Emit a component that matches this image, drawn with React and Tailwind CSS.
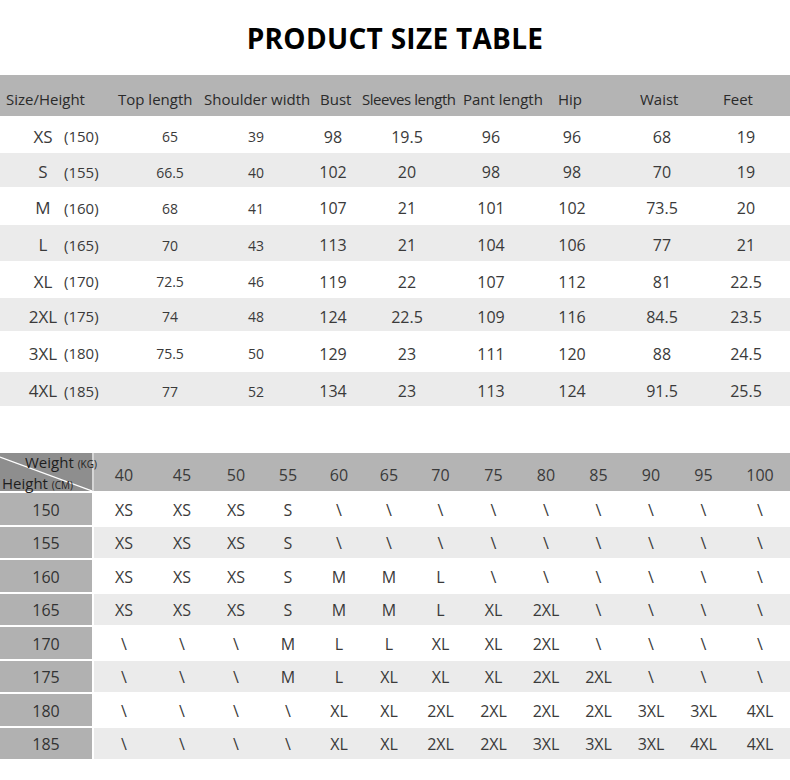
import React from 'react';

const headers = [
  { label: 'Size/Height', w: 'w-[118px] pl-[6px]' },
  { label: 'Top length', w: 'w-[86px]' },
  { label: 'Shoulder width', w: 'w-[116px]' },
  { label: 'Bust', w: 'w-[42px]' },
  { label: 'Sleeves length', w: 'w-[101px] tracking-[-0.45px]' },
  { label: 'Pant length', w: 'w-[95px]' },
  { label: 'Hip', w: 'w-[82px]' },
  { label: 'Waist', w: 'w-[83px]' },
  { label: 'Feet', w: 'flex-1' },
];

// widths for the measurement columns (cells are centred)
const cols = [
  { w: 'w-[80px]', size: 'text-[14px]' },
  { w: 'w-[92px]', size: 'text-[14px]' },
  { w: 'w-[62px]', size: 'text-[16px]' },
  { w: 'w-[86px]', size: 'text-[16px]' },
  { w: 'w-[82px]', size: 'text-[16px]' },
  { w: 'w-[80px]', size: 'text-[16px]' },
  { w: 'w-[100px]', size: 'text-[16px]' },
  { w: 'w-[68px]', size: 'text-[16px]' },
];

const sizes = [
  { size: 'XS', h: 150, vals: ['65', '39', '98', '19.5', '96', '96', '68', '19'], row: 'h-[37px] bg-white' },
  { size: 'S', h: 155, vals: ['66.5', '40', '102', '20', '98', '98', '70', '19'], row: 'h-[34px] bg-[#ebebeb]' },
  { size: 'M', h: 160, vals: ['68', '41', '107', '21', '101', '102', '73.5', '20'], row: 'h-[38px] bg-white' },
  { size: 'L', h: 165, vals: ['70', '43', '113', '21', '104', '106', '77', '21'], row: 'h-[36px] bg-[#ebebeb]' },
  { size: 'XL', h: 170, vals: ['72.5', '46', '119', '22', '107', '112', '81', '22.5'], row: 'h-[37px] bg-white' },
  { size: '2XL', h: 175, vals: ['74', '48', '124', '22.5', '109', '116', '84.5', '23.5'], row: 'h-[33px] bg-[#ebebeb]' },
  { size: '3XL', h: 180, vals: ['75.5', '50', '129', '23', '111', '120', '88', '24.5'], row: 'h-[41px] bg-white' },
  { size: '4XL', h: 185, vals: ['77', '52', '134', '23', '113', '124', '91.5', '25.5'], row: 'h-[34px] bg-[#ebebeb]' },
];

const weights = ['40', '45', '50', '55', '60', '65', '70', '75', '80', '85', '90', '95', '100'];
const wCols = [
  'w-[60px]', 'w-[56px]', 'w-[52px]', 'w-[52px]', 'w-[50px]', 'w-[50px]', 'w-[53px]',
  'w-[53px]', 'w-[52px]', 'w-[53px]', 'w-[52px]', 'w-[53px]', 'w-[60px]',
];

const B = '\\';
const chart = [
  { h: '150', vals: ['XS', 'XS', 'XS', 'S', B, B, B, B, B, B, B, B, B] },
  { h: '155', vals: ['XS', 'XS', 'XS', 'S', B, B, B, B, B, B, B, B, B] },
  { h: '160', vals: ['XS', 'XS', 'XS', 'S', 'M', 'M', 'L', B, B, B, B, B, B] },
  { h: '165', vals: ['XS', 'XS', 'XS', 'S', 'M', 'M', 'L', 'XL', '2XL', B, B, B, B] },
  { h: '170', vals: [B, B, B, 'M', 'L', 'L', 'XL', 'XL', '2XL', B, B, B, B] },
  { h: '175', vals: [B, B, B, 'M', 'L', 'XL', 'XL', 'XL', '2XL', '2XL', B, B, B] },
  { h: '180', vals: [B, B, B, B, 'XL', 'XL', '2XL', '2XL', '2XL', '2XL', '3XL', '3XL', '4XL'] },
  { h: '185', vals: [B, B, B, B, 'XL', 'XL', '2XL', '2XL', '3XL', '3XL', '3XL', '4XL', '4XL'] },
];

const SizeTable = () => (
  <div>
    <div className="flex h-[41px] items-center bg-[#b4b4b4] pt-[8px] text-[15px] text-[#2a2a2a]">
      {headers.map((h) => (
        <div key={h.label} className={`${h.w} shrink-0 whitespace-nowrap`}>
          {h.label}
        </div>
      ))}
    </div>
    {sizes.map((r) => (
      <div key={r.size} className={`flex items-center pt-[4px] text-[#3a3a3a] ${r.row}`}>
        <div className="ml-[24px] w-[38px] shrink-0 text-center text-[17px]">{r.size}</div>
        <div className="ml-[2px] w-[66px] shrink-0 text-[15px]">({r.h})</div>
        {r.vals.map((v, i) => (
          <div key={i} className={`${cols[i].w} ${cols[i].size} shrink-0 text-center`}>
            {v}
          </div>
        ))}
      </div>
    ))}
  </div>
);

const WeightChart = () => (
  <div>
    <div className="flex h-[38px] bg-[#b4b4b4]">
      <div className="relative w-[94px] shrink-0 border-r-2 border-[#d6d6d6] bg-[#8e8e8e] text-[15px] leading-[19px] text-[#1e1e1e]">
        <svg className="absolute inset-0" width="92" height="38">
          <line x1="0" y1="4" x2="92" y2="38" stroke="#ffffff" strokeWidth="1.2" />
        </svg>
        <div className="relative whitespace-nowrap pl-[25px]">
          Weight <span className="text-[10px]">(KG)</span>
        </div>
        <div className="relative whitespace-nowrap pl-[2px]">
          Height <span className="text-[10px]">(CM)</span>
        </div>
      </div>
      {weights.map((w, i) => (
        <div key={w} className={`${wCols[i]} flex shrink-0 items-center justify-center pt-[6px] text-[16px] text-[#3a3a3a]`}>
          {w}
        </div>
      ))}
    </div>
    {chart.map((r, ri) => (
      <div
        key={r.h}
        className={`flex h-[33.5px] border-t-2 border-white ${ri % 2 ? 'bg-[#ebebeb]' : 'bg-white'}`}
      >
        <div className="flex w-[94px] shrink-0 items-center justify-center border-r-2 border-white bg-[#b1b1b1] pt-[2px] text-[16px] text-[#333]">
          {r.h}
        </div>
        {r.vals.map((v, i) => (
          <div key={i} className={`${wCols[i]} flex shrink-0 items-center justify-center pt-[2px] text-[16px] text-[#3a3a3a]`}>
            {v}
          </div>
        ))}
      </div>
    ))}
  </div>
);

export default function App() {
  return (
    <div className="h-[780px] w-[790px] bg-white font-['Open_Sans',sans-serif]">
      <div className="flex h-[75px] items-center justify-center">
        <h1 className="text-[28px] font-bold tracking-[0.3px] text-black">PRODUCT SIZE TABLE</h1>
      </div>
      <SizeTable />
      <div className="h-[47px]" />
      <WeightChart />
    </div>
  );
}
